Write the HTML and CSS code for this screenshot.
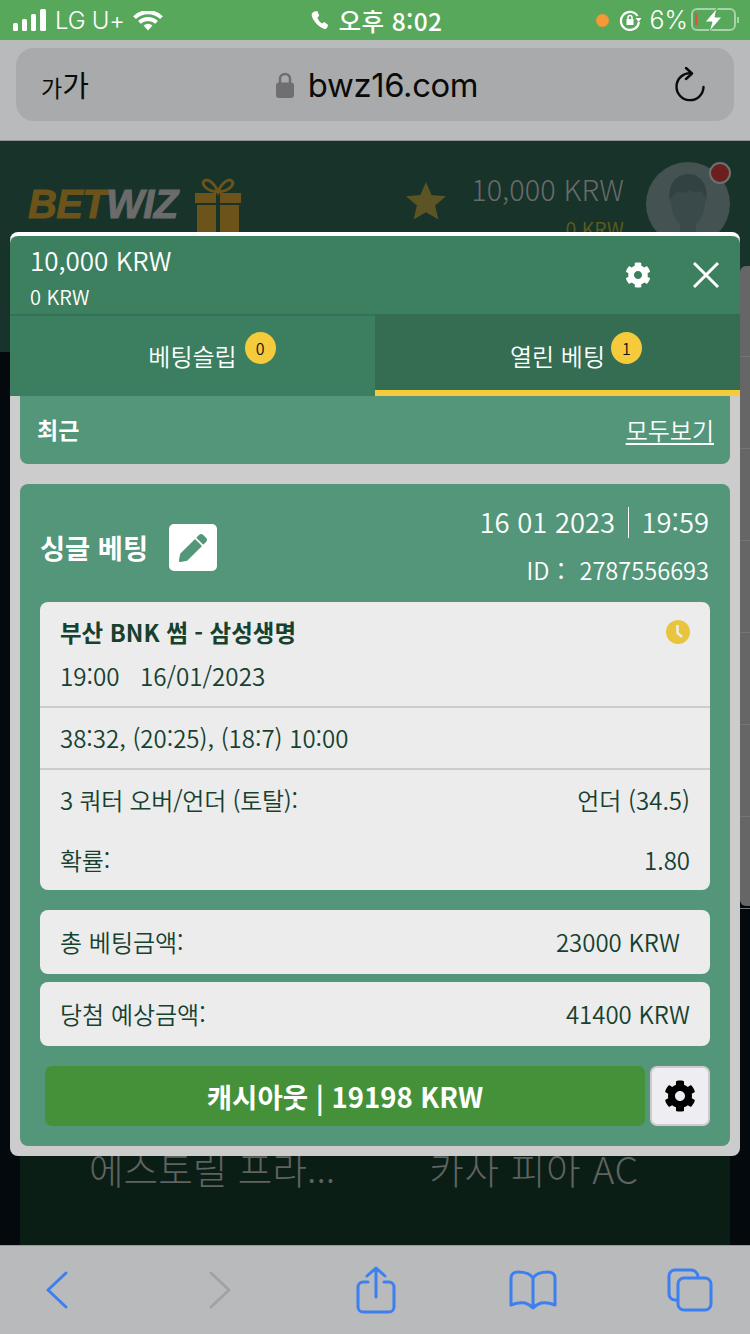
FILE: index.html
```html
<!DOCTYPE html>
<html lang="ko">
<head>
<meta charset="utf-8">
<title>BETWIZ</title>
<link rel="stylesheet" href="styles.css">
</head>
<body>
<div class="status">
  <div class="status-left">
    <svg class="ic-signal" width="33" height="22" viewBox="0 0 33 22"><rect x="0" y="14" width="5" height="8" rx="1.5"/><rect x="9" y="10" width="5" height="12" rx="1.5"/><rect x="18" y="5" width="5" height="17" rx="1.5"/><rect x="27" y="0" width="6" height="22" rx="1.5"/></svg>
    <span class="carrier">LG U+</span>
    <svg class="ic-wifi" width="30" height="20" viewBox="0 0 30 20"><path d="M1.5 6.6a19.5 19.5 0 0 1 27 0" /><path d="M6.4 11.4a12.6 12.6 0 0 1 17.2 0"/><path class="fill" d="M10.5 14.6a6.6 6.6 0 0 1 9 0L15 19.6z"/></svg>
  </div>
  <div class="status-mid">
    <svg class="ic-phone" width="18" height="18" viewBox="0 0 18 18"><path d="M3.6.6 6.3 0l2 4.7-1.9 1.700c.6 2.300 2.600 5 4.800 6.200l2-1.500 4 3-1 2.300c-.5 1.100-2.100 2-3.400 1.400C7.200 15.600 1.800 9.500.7 4.500.4 2.800 1.900 1.200 3.600.6z"/></svg>
    <span class="clock">오후 8:02</span>
  </div>
  <div class="status-right">
    <span class="dot"></span>
    <svg class="ic-rot" width="22" height="22" viewBox="0 0 22 22"><path class="ln" d="M18.500 7A9 9 0 1 0 19.900 13"/><path class="fill" d="M16.500 9h6l-3 4zM7.500 10h7v6h-7z"/><path class="ln thin" d="M9 10V8.500a2 2 0 0 1 4 0V10"/></svg>
    <span class="pct">6%</span>
    <svg class="ic-batt" width="48" height="24" viewBox="0 0 48 24"><rect class="shell" x="1" y="1" width="43" height="21" rx="5"/><rect class="low" x="4" y="5" width="2.300" height="12"/><path class="nub" d="M47 9v6"/><path class="bolt" d="M26 0 14 14h7l-3 10 13-15h-7z"/></svg>
  </div>
</div>

<div class="safari">
  <div class="urlbar">
    <span class="aa"><small>가</small>가</span>
    <div class="addr">
      <svg width="18" height="26" viewBox="0 0 18 26"><path class="shackle" d="M4 12V7a5 5 0 0 1 10 0v5"/><rect y="10.500" width="18" height="15.500" rx="3"/></svg>
      <span class="host">bwz16.com</span>
    </div>
    <svg class="ic-reload" width="32" height="36" viewBox="0 0 32 36"><path d="M17 6.200A13.500 13.500 0 1 0 29.500 20"/><path d="M12 1l6 5.500-6 5.500"/></svg>
  </div>
</div>

<main class="page">
  <header class="site-head">
    <div class="brand">
      <span class="logo"><b>BET</b><i>WIZ</i></span>
      <svg class="gift" width="48" height="54" viewBox="0 0 48 54"><path class="bow" d="M24 14C20 4 13 0 10 3s2 10 14 11c12-1 17-8 14-11s-10 1-14 11z"/><path class="box" d="M1 15h21v10H1zM26 15h21v10H26zM3 27h19v27H3zM26 27h19v27H26z"/></svg>
    </div>
    <div class="account">
      <svg class="star" width="40" height="40" viewBox="0 0 40 40"><path d="M20 1l5.600 13 14.400 1.200-10.900 9.400 3.300 14-12.400-7.400-12.400 7.400 3.300-14L0 15.200 14.400 14z"/></svg>
      <div class="balance">
        <span class="bal-main">10,000 KRW</span>
        <span class="bal-bonus">0 KRW</span>
      </div>
      <div class="avatar">
        <svg width="84" height="84" viewBox="0 0 84 84"><path class="sil" d="M10 84c2-8 18-10 24-13v-9c-6-5-9-14-9-22 0-14 7-22 17-22s17 8 17 22c0 8-3 17-9 22v9c6 3 22 5 24 13z"/><path class="hair" d="M24 40c-3-14 4-28 18-28s21 13 18 28c-1-7-3-10-6-11-4 2-8 1-10-1-3 3-9 3-13 2-3 2-6 5-7 10z"/></svg>
        <span class="notif"></span>
      </div>
    </div>
  </header>
  <section class="lower">
    <div class="lower-panel">
      <span class="team team-a">에스토릴 프라...</span>
      <span class="team team-b">카사 피아 AC</span>
    </div>
  </section>
  <div class="side-strip">
    <span></span><span></span><span></span><span></span><span></span><span></span><span></span>
  </div>

  <div class="modal">
    <div class="modal-head">
      <div class="mh-bal">
        <span class="mh-main">10,000 KRW</span>
        <span class="mh-sub">0 KRW</span>
      </div>
      <div class="mh-actions">
        <svg class="cog" width="26" height="26" viewBox="0 0 512 512"><path d="M487.4 315.700l-42.600-24.600c4.300-23.200 4.300-47 0-70.200l42.600-24.600c4.900-2.800 7.100-8.600 5.500-14-11.100-35.600-30-67.800-54.700-94.600-3.800-4.100-10-5.100-14.800-2.300L380.800 110c-17.900-15.400-38.500-27.300-60.800-35.100V25.800c0-5.600-3.900-10.500-9.400-11.700-36.700-8.200-74.300-7.800-109.200 0-5.500 1.200-9.400 6.100-9.400 11.700V75c-22.200 7.900-42.800 19.800-60.800 35.100L88.700 85.500c-4.900-2.800-11-1.900-14.800 2.300-24.700 26.700-43.600 58.900-54.700 94.600-1.700 5.400.6 11.200 5.500 14L67.300 221c-4.300 23.200-4.300 47 0 70.200l-42.600 24.600c-4.900 2.800-7.100 8.600-5.500 14 11.100 35.600 30 67.800 54.700 94.600 3.800 4.100 10 5.100 14.800 2.300l42.600-24.600c17.900 15.400 38.500 27.300 60.800 35.100v49.200c0 5.600 3.900 10.500 9.400 11.700 36.700 8.200 74.300 7.800 109.200 0 5.500-1.200 9.400-6.100 9.400-11.700v-49.200c22.200-7.900 42.800-19.800 60.800-35.100l42.600 24.600c4.900 2.800 11 1.900 14.800-2.300 24.700-26.700 43.600-58.900 54.700-94.600 1.500-5.500-.7-11.300-5.600-14.100zM256 336c-44.100 0-80-35.900-80-80s35.900-80 80-80 80 35.900 80 80-35.900 80-80 80z"/></svg>
        <svg class="close" width="28" height="28" viewBox="0 0 28 28"><path d="M2 2l24 24M26 2L2 26"/></svg>
      </div>
    </div>
    <div class="tabs">
      <div class="tab"><span class="tab-label">베팅슬립<em class="badge">0</em></span></div>
      <div class="tab active"><span class="tab-label">열린 베팅<em class="badge">1</em></span></div>
    </div>
    <div class="modal-body">
      <div class="recent">
        <strong>최근</strong>
        <a class="all">모두보기</a>
      </div>
      <article class="bet">
        <div class="bet-top">
          <div class="bet-title">
            <strong>싱글 베팅</strong>
            <span class="edit"><svg width="28" height="28" viewBox="0 0 512 512"><path d="M497.900 142.100l-46.100 46.100c-4.700 4.700-12.300 4.700-17 0l-111-111c-4.700-4.700-4.700-12.300 0-17l46.100-46.100c18.700-18.700 49.100-18.700 67.900 0l60.100 60.100c18.800 18.700 18.800 49.100 0 67.900zM284.200 99.800L21.600 362.400.4 483.900c-2.900 16.400 11.400 30.600 27.800 27.800l121.500-21.300 262.600-262.600c4.700-4.700 4.700-12.300 0-17l-111-111c-4.800-4.700-12.400-4.700-17.100 0z"/></svg></span>
          </div>
          <div class="bet-meta">
            <span>16 01 2023 <i class="sep"></i> 19:59</span>
            <span>ID： 2787556693</span>
          </div>
        </div>
        <div class="box">
          <div class="match">
            <div class="match-name">
              <strong>부산 BNK 썸 - 삼성생명</strong>
              <svg width="24" height="24" viewBox="0 0 24 24"><circle class="cl-bg" cx="12" cy="12" r="12"/><path class="cl-hand" d="M11.500 5v8l4.500 4"/></svg>
            </div>
            <span class="match-time">19:00&nbsp;&nbsp;&nbsp;16/01/2023</span>
          </div>
          <div class="score">38:32, (20:25), (18:7) 10:00</div>
          <div class="odds">
            <div class="kv"><span>3 쿼터 오버/언더 (토탈):</span><span>언더 (34.5)</span></div>
            <div class="kv"><span>확률:</span><span>1.80</span></div>
          </div>
        </div>
        <div class="box kv-box stake"><span>총 베팅금액:</span><span>23000 KRW</span></div>
        <div class="box kv-box win"><span>당첨 예상금액:</span><span>41400 KRW</span></div>
        <div class="actions">
          <button class="cashout">캐시아웃 | 19198 KRW</button>
          <button class="gear"><svg width="32" height="32" viewBox="0 0 512 512"><path d="M487.4 315.700l-42.600-24.600c4.300-23.200 4.300-47 0-70.200l42.600-24.600c4.900-2.800 7.100-8.600 5.500-14-11.100-35.600-30-67.800-54.700-94.600-3.800-4.100-10-5.100-14.800-2.300L380.800 110c-17.900-15.400-38.500-27.300-60.800-35.100V25.800c0-5.600-3.900-10.500-9.400-11.700-36.700-8.200-74.300-7.800-109.200 0-5.500 1.200-9.400 6.100-9.400 11.700V75c-22.200 7.900-42.800 19.800-60.800 35.100L88.700 85.500c-4.900-2.800-11-1.900-14.800 2.300-24.700 26.700-43.600 58.900-54.700 94.600-1.700 5.400.6 11.200 5.500 14L67.300 221c-4.300 23.200-4.300 47 0 70.200l-42.600 24.600c-4.900 2.800-7.100 8.600-5.500 14 11.100 35.600 30 67.800 54.700 94.600 3.800 4.100 10 5.100 14.800 2.300l42.600-24.600c17.900 15.400 38.500 27.300 60.800 35.100v49.200c0 5.600 3.900 10.500 9.400 11.700 36.700 8.200 74.300 7.800 109.200 0 5.500-1.200 9.400-6.100 9.400-11.700v-49.200c22.200-7.900 42.800-19.800 60.800-35.100l42.600 24.600c4.900 2.800 11 1.900 14.800-2.300 24.700-26.700 43.600-58.900 54.700-94.600 1.500-5.500-.7-11.300-5.600-14.100zM256 336c-44.100 0-80-35.900-80-80s35.900-80 80-80 80 35.900 80 80-35.900 80-80 80z"/></svg></button>
        </div>
      </article>
    </div>
  </div>
</main>

<nav class="toolbar">
  <svg class="tb blue" width="24" height="38" viewBox="0 0 24 38"><path d="M21 2 3 19l18 17"/></svg>
  <svg class="tb grey" width="24" height="38" viewBox="0 0 24 38"><path d="M3 2l18 17L3 36"/></svg>
  <svg class="tb blue" width="40" height="48" viewBox="0 0 40 48"><path d="M12 16H7a5 5 0 0 0-5 5v20a5 5 0 0 0 5 5h26a5 5 0 0 0 5-5V21a5 5 0 0 0-5-5h-5"/><path d="M20 31V2M11 10l9-8 9 8"/></svg>
  <svg class="tb blue" width="48" height="40" viewBox="0 0 48 40"><path d="M24 8C21 3 15 2 9 2 5 2 2 4 2 8v27c5-2 9-3 14-2 3 1 6 3 8 5 2-2 5-4 8-5 5-1 9 0 14 2V8c0-4-3-6-7-6-6 0-12 1-15 6zM24 8v28"/></svg>
  <svg class="tb blue" width="46" height="44" viewBox="0 0 46 44"><path d="M10 32H8a6 6 0 0 1-6-6V8a6 6 0 0 1 6-6h16a7 7 0 0 1 7 7"/><rect x="11" y="10" width="33" height="32" rx="6"/></svg>
</nav>
</body>
</html>
```

FILE: styles.css
```css
* { box-sizing: border-box; }
html, body { margin: 0; padding: 0; }
body {
  width: 750px;
  height: 1334px;
  overflow: hidden;
  display: flex;
  flex-direction: column;
  background: #000;
  font-family: "Noto Sans CJK KR", "Noto Sans", sans-serif;
}

/* iOS status bar */
.status {
  height: 40px;
  flex: none;
  background: #57a85b;
  color: #fff;
  display: grid;
  grid-template-columns: 1fr auto 1fr;
  align-items: center;
  padding: 0 11px 0 13px;
  font-family: Inter, "Noto Sans CJK KR", sans-serif;
}
.status-left { display: flex; align-items: center; }
.ic-signal { fill: #fff; }
.carrier { font-size: 24px; font-weight: 300; margin-left: 9px; letter-spacing: -.2px; }
.ic-wifi { margin-left: 8px; margin-top: 2px; fill: none; stroke: #fff; stroke-width: 4; }
.ic-wifi .fill { fill: #fff; stroke: none; }
.status-mid { display: flex; align-items: center; margin-left: 1px; }
.ic-phone { fill: #fff; }
.clock { font-family: "Noto Sans CJK KR", sans-serif; font-size: 24.500px; font-weight: 500; margin-left: 10px; letter-spacing: .4px; }
.status-right { display: flex; align-items: center; justify-content: flex-end; }
.dot { width: 13px; height: 13px; border-radius: 50%; background: #f39a36; }
.ic-rot { margin-left: 10px; fill: none; }
.ic-rot .ln { stroke: #fff; stroke-width: 2.200; fill: none; }
.ic-rot .thin { stroke-width: 1.500; }
.ic-rot .fill { fill: #fff; }
.pct { font-size: 25px; font-weight: 300; margin-left: 9px; }
.ic-batt { margin-left: 3px; }
.ic-batt .shell { fill: none; stroke: #a8d2aa; stroke-width: 2; }
.ic-batt .low { fill: #e8503a; }
.ic-batt .nub { stroke: #a8d2aa; stroke-width: 2; }
.ic-batt .bolt { fill: #fff; stroke: #57a85b; stroke-width: 1; }

/* Safari address bar */
.safari {
  height: 101px;
  flex: none;
  background: #b9babc;
  padding: 8px 16px 20px;
  border-bottom: 1px solid #8f9492;
}
.urlbar {
  height: 73px;
  background: #a9aaac;
  border-radius: 18px;
  display: flex;
  align-items: center;
  justify-content: space-between;
  padding: 0 28px 0 25px;
  color: #0a0a0a;
}
.aa { font-size: 29px; line-height: 1; width: 48px; }
.aa small { font-size: 23px; }
.addr { display: flex; align-items: center; gap: 14px; margin-left: -9px; }
.addr rect { fill: #6e6e73; }
.shackle { fill: none; stroke: #6e6e73; stroke-width: 2.500; }
.host { font-family: Inter, sans-serif; font-size: 32.800px; font-weight: 400; letter-spacing: -.35px; }
.ic-reload { fill: none; stroke: #0a0a0a; stroke-width: 2.400; stroke-linecap: round; stroke-linejoin: round; }

/* Dimmed page */
.page { flex: 1; position: relative; display: flex; flex-direction: column; min-height: 0; }
.site-head {
  height: 211px;
  flex: none;
  background: #17332a;
  display: flex;
  justify-content: space-between;
  align-items: flex-start;
  padding: 21px 20px 0 28px;
}
.brand { display: flex; align-items: flex-start; gap: 16px; }
.logo { font-family: "Liberation Sans", sans-serif; font-size: 40px; font-weight: 700; font-style: italic; line-height: 1; margin-top: 22px; letter-spacing: -.6px; -webkit-text-stroke: 1px currentColor; color: #6b5319; }
.logo b { color: #6b5319; }
.logo i { color: #6b6b6b; }
.gift { margin-top: 16px; }
.gift .bow { fill: none; stroke: #6b5319; stroke-width: 3; }
.gift .box { fill: #6b5319; }
.account { display: flex; align-items: flex-start; }
.star { fill: #5c5425; margin-top: 19px; }
.balance { display: flex; flex-direction: column; align-items: flex-end; margin-left: 25px; margin-top: 8px; }
.bal-main { font-size: 28.800px; line-height: 38px; color: #6a6a6a; font-weight: 300; }
.bal-bonus { font-size: 19.500px; line-height: 42px; color: #5a5a1e; }
.avatar { width: 84px; height: 84px; border-radius: 50%; background: #445252; margin-left: 22px; position: relative; }
.avatar svg { display: block; border-radius: 50%; overflow: hidden; }
.avatar .sil { fill: #3a4a4a; }
.avatar .hair { fill: #324142; }
.notif { position: absolute; right: -1px; top: 0; width: 22px; height: 22px; border-radius: 50%; background: #6b1f1f; border: 2px solid #6f6f6f; }

.lower { flex: 1; background: #03090c; padding: 0 20px; min-height: 0; }
.lower-panel {
  height: 100%;
  background: #0b1e15;
  display: flex;
  align-items: flex-end;
  padding: 0 0 49px 69px;
  color: #5f6361;
  font-size: 37.600px;
  font-weight: 300;
  line-height: 56px;
}
.team-b { margin-left: 94px; letter-spacing: .6px; }
.side-strip {
  position: absolute;
  right: 0;
  top: 125px;
  width: 10px;
  height: 640px;
  background: #666;
  display: flex;
  flex-direction: column;
  border-radius: 6px 0 0 6px;
}
.side-strip span { height: 92px; border-bottom: 1px solid #757575; flex: none; }
.side-strip span:first-child { height: 91px; }

/* Modal */
.modal {
  position: absolute;
  left: 10px;
  top: 91px;
  width: 730px;
  background: #ccc;
  border-top: 4px solid #fff;
  border-radius: 8px;
  overflow: hidden;
}
.modal-head {
  height: 78px;
  background: #3c8060;
  border-radius: 8px 8px 0 0;
  color: #fff;
  display: flex;
  justify-content: space-between;
  align-items: flex-start;
  padding: 6px 20px 0;
}
.mh-bal { display: flex; flex-direction: column; }
.mh-main { font-size: 26px; line-height: 36px; font-weight: 350; }
.mh-sub { font-size: 20px; line-height: 38px; font-weight: 350; }
.mh-actions { display: flex; align-items: center; gap: 41px; margin-top: 19px; }
.cog { fill: #fff; }
.close { stroke: #fff; stroke-width: 3; fill: none; }
.tabs { display: flex; height: 82px; background: #357058; }
.tab { flex: 1; background: #3c7f60; margin-top: 2px; color: #fff; display: flex; justify-content: center; align-items: center; }
.tab.active { background: #356d53; margin-top: 0; border-bottom: 6px solid #f5cb3c; }
.tab-label { position: relative; font-size: 24px; font-weight: 350; line-height: 30px; }
.tab.active .tab-label { top: 4px; }
.badge { position: absolute; left: 100%; margin-left: 8px; top: -9px; width: 31px; height: 32px; border-radius: 50%; background: #f5cb3c; color: #111; font-style: normal; font-size: 16px; line-height: 32px; text-align: center; }
.tab.active .badge { margin-left: 6px; }
.modal-body { padding: 0 10px 10px; display: flex; flex-direction: column; gap: 20px; }
.recent {
  height: 68px;
  background: #53967a;
  border-radius: 0 0 8px 8px;
  display: flex;
  justify-content: space-between;
  align-items: center;
  padding: 0 16px 2px 17px;
  color: #fff;
}
.recent strong { font-size: 23px; font-weight: 700; }
.all { font-size: 24px; text-decoration: underline; font-weight: 350; text-underline-offset: 3px; }
.bet { background: #53967a; border-radius: 8px; padding: 0 20px 20px; display: flex; flex-direction: column; }
.bet-top { height: 118px; display: flex; justify-content: space-between; align-items: flex-start; color: #fff; }
.bet-title { display: flex; align-items: center; gap: 21px; margin-top: 40px; }
.bet-title strong { font-size: 27.300px; font-weight: 700; line-height: 47px; }
.edit { width: 48px; height: 47px; background: #fff; border-radius: 5px; display: flex; align-items: center; justify-content: center; fill: #53967a; }
.bet-meta { display: flex; flex-direction: column; align-items: flex-end; font-weight: 350; font-size: 27.400px; line-height: 36px; margin-top: 19px; margin-right: 1px; }
.bet-meta span + span { font-size: 23.600px; margin-top: 13px; }
.sep { display: inline-block; width: 1px; height: 31px; background: #fff; vertical-align: -5px; margin: 0 5px; }
.box { background: #ececec; border-radius: 8px; color: #16412f; font-size: 24px; font-weight: 350; line-height: 34px; }
.match { height: 106px; padding: 13px 20px 0; border-bottom: 2px solid #ccc; display: flex; flex-direction: column; }
.match-name { display: flex; justify-content: space-between; align-items: center; }
.match-name strong { font-size: 23.500px; font-weight: 700; }
.cl-bg { fill: #e9c53e; }
.cl-hand { fill: none; stroke: #ececec; stroke-width: 2.500; }
.match-time { margin-top: 10px; font-size: 24.200px; }
.score { height: 62px; padding: 0 20px; border-bottom: 2px solid #ccc; display: flex; align-items: center; }
.odds { height: 120px; padding: 0 20px; display: flex; flex-direction: column; justify-content: space-between; }
.kv { display: flex; justify-content: space-between; align-items: center; height: 60px; }
.odds .kv:first-child { height: 62px; }
.odds .kv span:first-child { letter-spacing: -.25px; }
.kv-box { height: 64px; display: flex; justify-content: space-between; align-items: center; padding: 0 20px; }
.stake { margin-top: 20px; padding-right: 30px; }
.win { margin-top: 8px; }
.actions { display: flex; margin-top: 20px; padding-left: 5px; gap: 5px; }
.cashout { flex: 1; height: 60px; background: #45913a; color: #fff; border: 0; border-radius: 7px; font-family: inherit; font-size: 27.500px; font-weight: 700; padding: 0; }
.gear { width: 60px; height: 60px; background: #eeeef2; border: 2px solid #ccc; border-radius: 7px; padding: 0; display: flex; align-items: center; justify-content: center; }

/* Safari toolbar */
.toolbar {
  height: 89px;
  flex: none;
  background: #b9babc;
  border-top: 1px solid #96999a;
  display: flex;
  align-items: center;
  padding-left: 45px;
}
.tb { fill: none; stroke-width: 3; stroke-linecap: round; stroke-linejoin: round; }
.tb:nth-child(2) { margin-left: 139px; }
.tb:nth-child(3) { margin-left: 124px; }
.tb:nth-child(4) { margin-left: 113px; }
.tb:nth-child(5) { margin-left: 110px; }
.tb.blue { stroke: #3b7ff0; }
.tb.grey { stroke: #a1a2a4; }
```
